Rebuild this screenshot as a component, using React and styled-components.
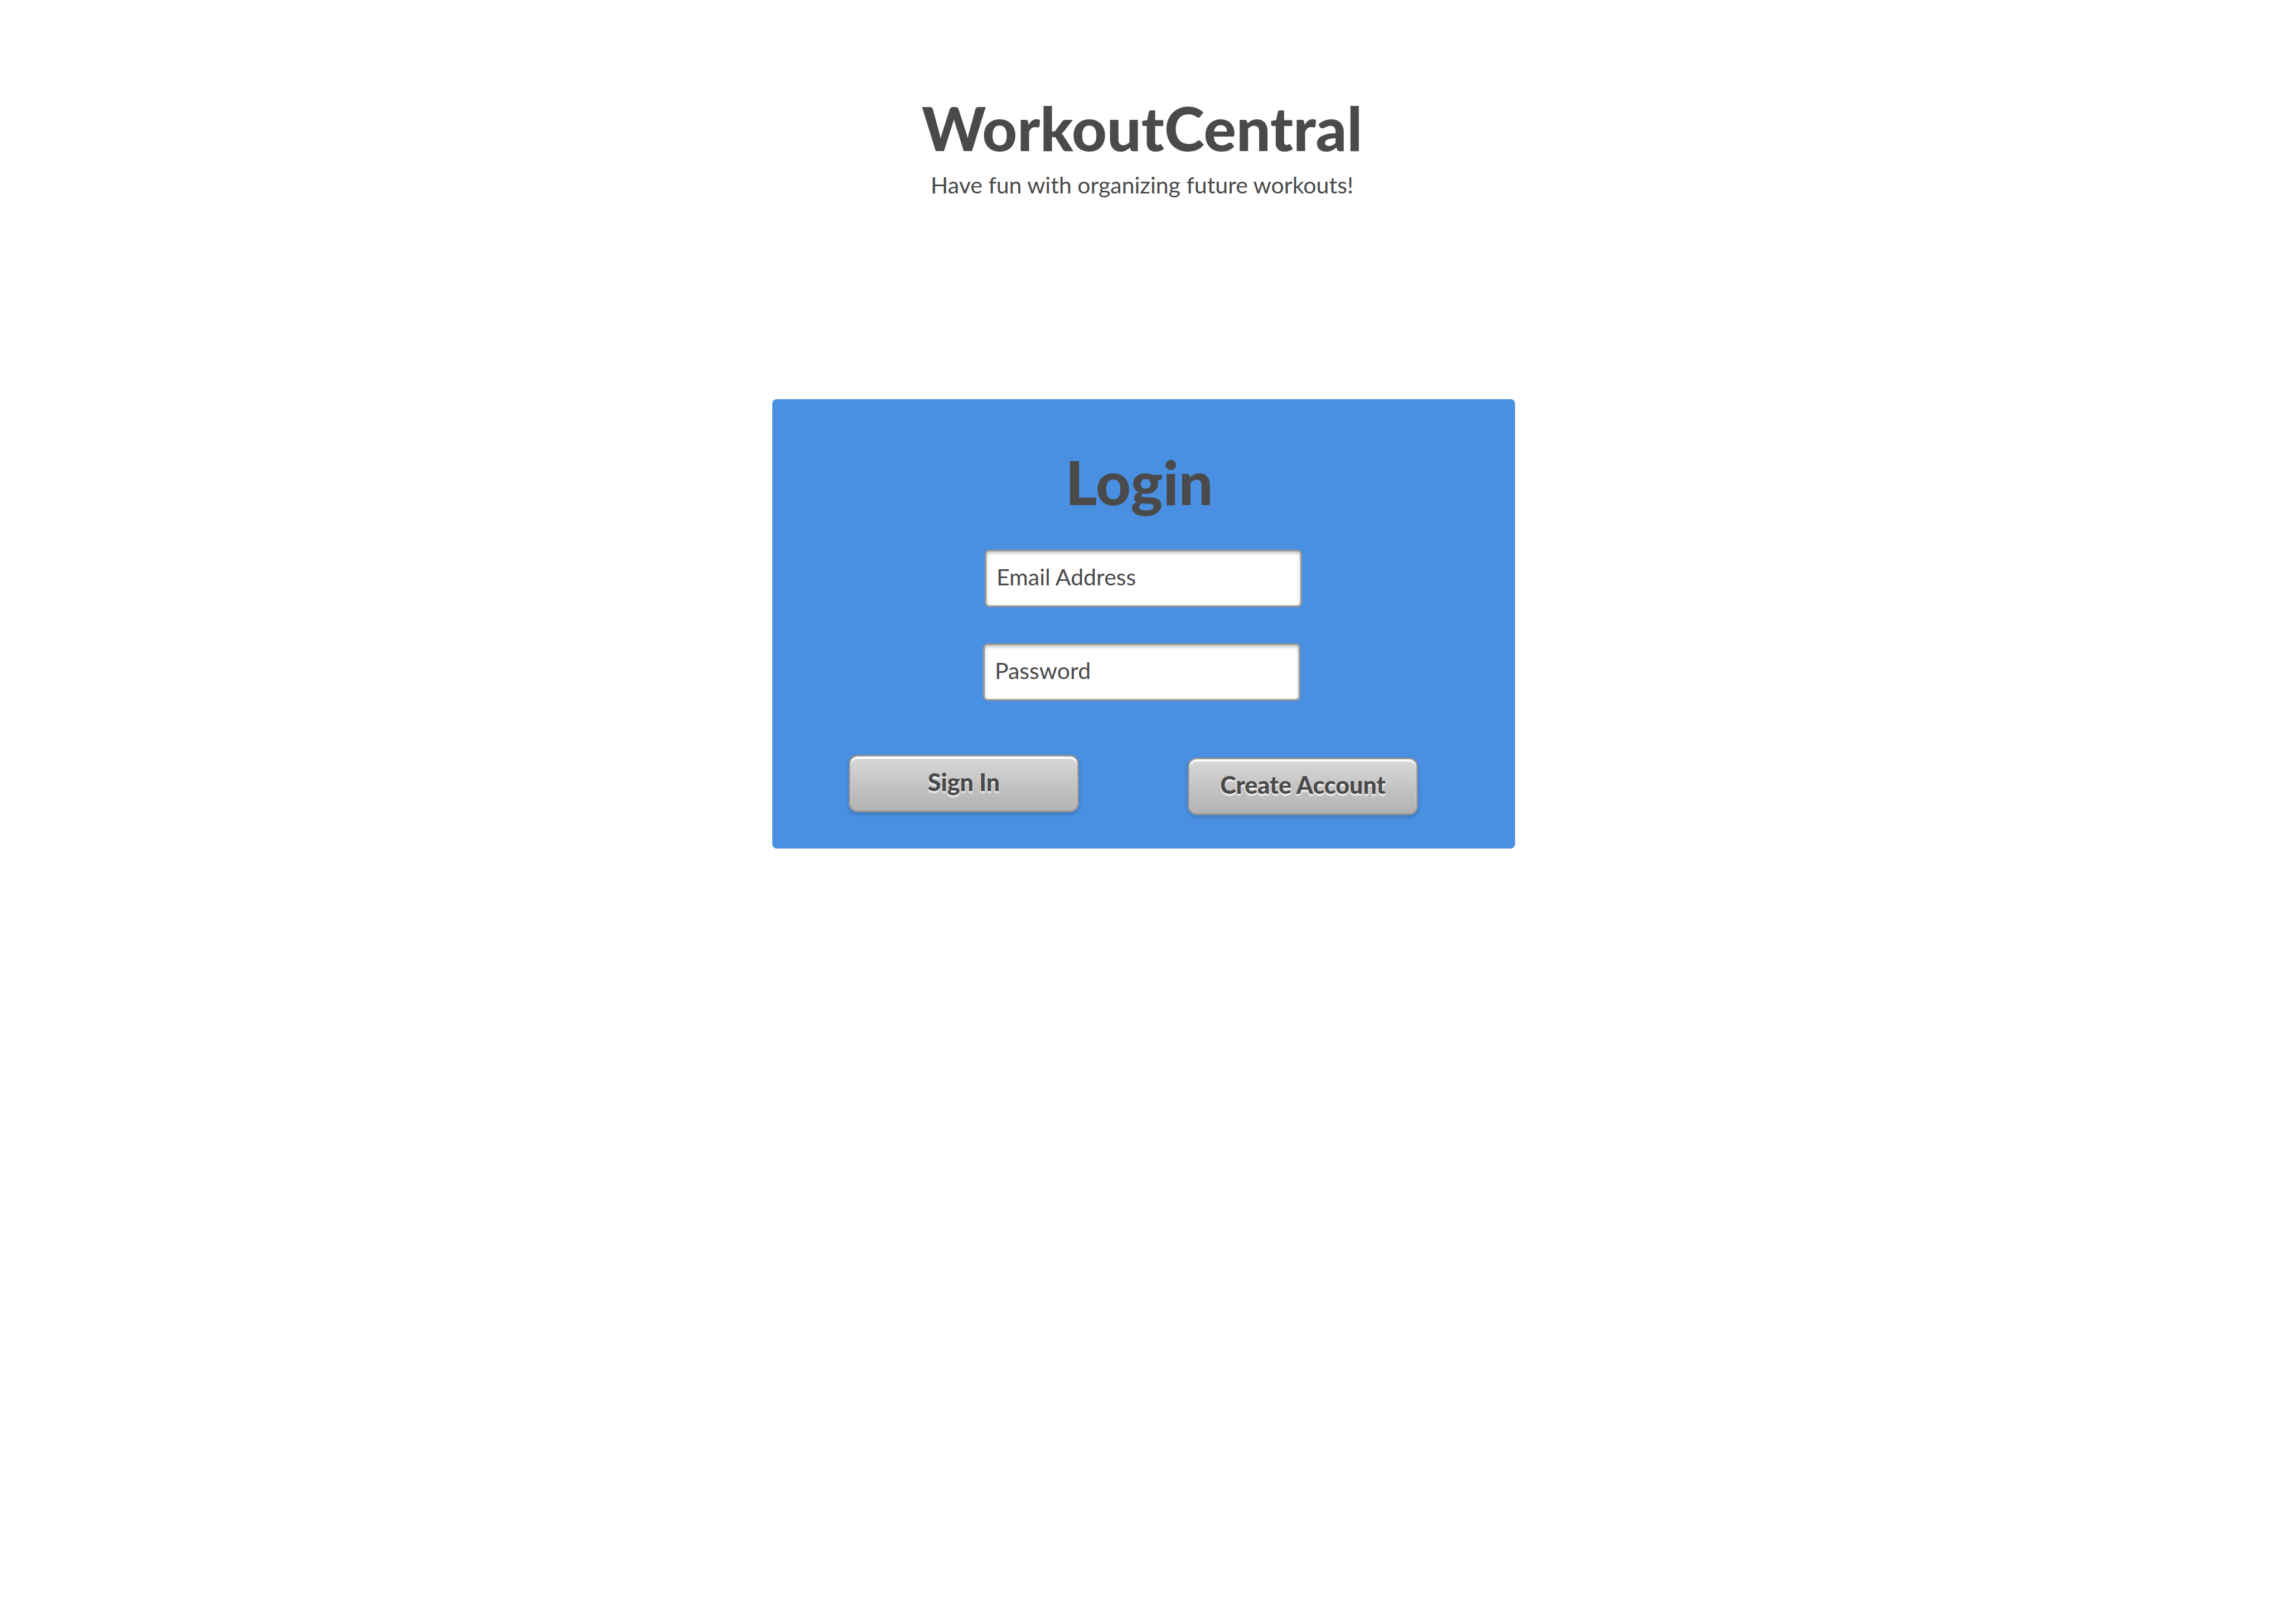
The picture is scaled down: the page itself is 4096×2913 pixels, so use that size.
import React from "react";
import styled, { createGlobalStyle } from "styled-components";

const GlobalStyle = createGlobalStyle`
  *, *::before, *::after { box-sizing: border-box; }
  body {
    margin: 0;
    background: #fff;
    color: #4a4a4a;
    font-family: "Lato", "Open Sans", sans-serif;
  }
`;

const Page = styled.main`
  display: flex;
  flex-direction: column;
  align-items: center;
  min-height: 100vh;
  padding: 167px 24px 0;
`;

const Header = styled.header`
  text-align: center;
  margin-bottom: 354px;
`;

const Heading = styled.h1`
  margin: 0;
  font-size: 109px;
  line-height: 124px;
  font-weight: 900;
`;

const Tagline = styled.p`
  margin: 11px 0 0;
  font-size: 41px;
  line-height: 60px;
  font-weight: 400;
`;

const Card = styled.form`
  display: flex;
  flex-direction: column;
  align-items: center;
  width: 100%;
  max-width: 1332px;
  margin-left: 6px;
  padding: 86px 4px 60px 0;
  border-radius: 8px;
  background: #4a90e2;
`;

const CardTitle = styled(Heading).attrs({ as: "h2" })`
  padding-right: 12px;
  margin-bottom: 60px;
`;

const Fields = styled.div`
  display: flex;
  flex-direction: column;
  gap: 65px;
  width: 100%;
  max-width: 572px;
`;

const Field = styled.input`
  align-self: ${({ $align }) => $align};
  width: 569px;
  max-width: 100%;
  height: 103px;
  padding: 0 18px 6px;
  border: 3px solid #979797;
  border-radius: 8px;
  background: #fff;
  box-shadow: inset 0 3px 6px rgba(0, 0, 0, 0.25);
  color: #4a4a4a;
  font: 400 41px/60px "Lato", "Open Sans", sans-serif;

  &::placeholder {
    color: #4a4a4a;
    opacity: 1;
  }
`;

const Actions = styled.div`
  display: flex;
  justify-content: space-between;
  width: 100%;
  height: 108px;
  margin-top: 97px;
  padding: 0 170px 0 137px;
`;

const Button = styled.button`
  align-self: ${({ $align }) => $align};
  width: 413px;
  height: 103px;
  padding: 0 0 6px;
  border: 3px solid #979797;
  border-radius: 16px;
  background: linear-gradient(#d8d8d8, #b2b2b2);
  box-shadow: inset 0 4px 2px #fff, 0 3px 8px rgba(0, 0, 0, 0.2);
  color: #4a4a4a;
  font: 900 43px/60px "Lato", "Open Sans", sans-serif;
  text-shadow: 0 3px 3px #fff;
`;

export default function App() {
  return (
    <>
      <GlobalStyle />
      <Page>
        <Header>
          <Heading>WorkoutCentral</Heading>
          <Tagline>Have fun with organizing future workouts!</Tagline>
        </Header>
        <Card onSubmit={(event) => event.preventDefault()}>
          <CardTitle>Login</CardTitle>
          <Fields>
            <Field $align="flex-end" type="email" placeholder="Email Address" aria-label="Email Address" />
            <Field $align="flex-start" type="password" placeholder="Password" aria-label="Password" />
          </Fields>
          <Actions>
            <Button $align="flex-start" type="submit">Sign In</Button>
            <Button $align="flex-end" type="button">Create Account</Button>
          </Actions>
        </Card>
      </Page>
    </>
  );
}
